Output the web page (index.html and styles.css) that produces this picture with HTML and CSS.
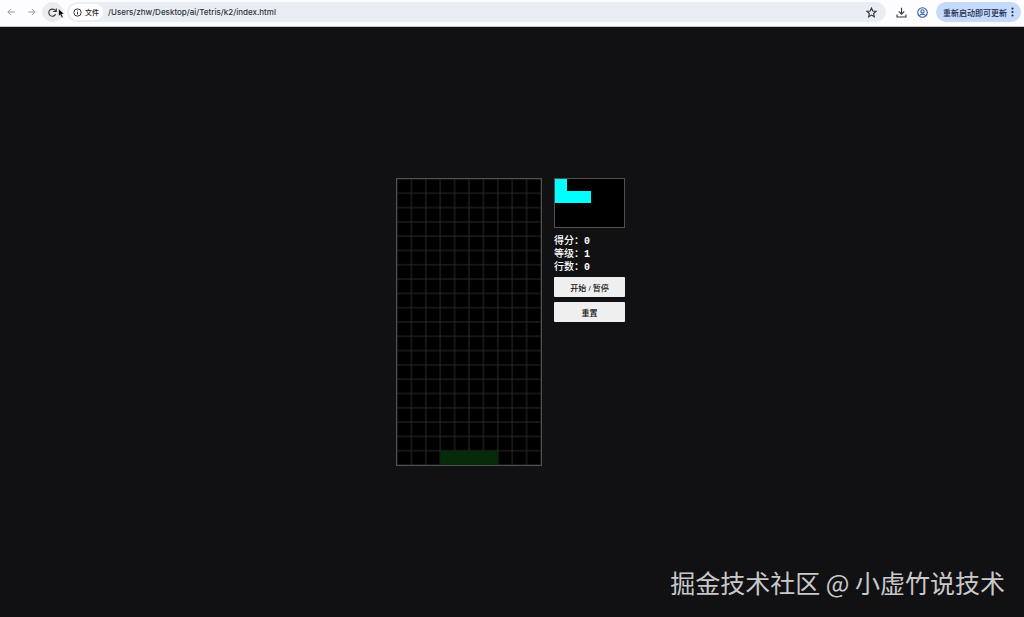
FILE: index.html
```
<!DOCTYPE html>
<html lang="zh-CN">
<head>
<meta charset="UTF-8">
<meta name="viewport" content="width=device-width, initial-scale=1.0">
<title>Tetris</title>
<link rel="stylesheet" href="styles.css">
</head>
<body>

<!-- Browser toolbar -->
<header class="toolbar">
    <button class="icon-btn nav-btn" aria-label="后退">
        <svg viewBox="0 0 16 16"><path d="M14 8H3M8 3L3 8l5 5"/></svg>
    </button>
    <button class="icon-btn nav-btn" aria-label="前进">
        <svg viewBox="0 0 16 16"><path d="M2 8h11M8 3l5 5-5 5"/></svg>
    </button>
    <button class="icon-btn reload-btn" aria-label="重新加载">
        <svg viewBox="0 0 16 16"><path d="M12.500 10.500a5.200 5.200 0 1 1-.6-5.500L13.500 6.500"/><path d="M13.500 2v4.500H9"/></svg>
        <svg class="cursor" viewBox="0 0 12 18"><path d="M1 1v13l3-3 2.500 5.500 2.500-1L6.500 10H11z"/></svg>
    </button>
    <div class="address-bar">
        <button class="file-chip">
            <svg viewBox="0 0 16 16"><circle cx="8" cy="8" r="6.500"/><path d="M8 7v4.500M8 4.200v1.600"/></svg>
            文件
        </button>
        <input class="url" type="text" aria-label="地址" value="/Users/zhw/Desktop/ai/Tetris/k2/index.html">
        <button class="icon-btn star-btn" aria-label="收藏">
            <svg viewBox="0 0 16 16"><path d="M8 1.500l1.900 4.400 4.800.4-3.600 3.200 1.100 4.700L8 11.700l-4.200 2.500 1.100-4.700L1.300 6.300l4.800-.4z"/></svg>
        </button>
    </div>
    <button class="icon-btn download-btn" aria-label="下载">
        <svg viewBox="0 0 16 16"><path d="M8 1v9M4 6.500l4 4 4-4M1.500 11v3.500h13V11"/></svg>
    </button>
    <button class="icon-btn profile-btn" aria-label="用户">
        <svg viewBox="0 0 16 16"><circle cx="8" cy="8" r="6.900"/><circle cx="8" cy="6.500" r="2.400"/><path d="M3.500 12.500c2-2.600 7-2.600 9 0"/></svg>
    </button>
    <button class="update-btn">
        重新启动即可更新
        <svg viewBox="0 0 4 16"><circle cx="2" cy="2.500" r="1.700"/><circle cx="2" cy="8" r="1.700"/><circle cx="2" cy="13.500" r="1.700"/></svg>
    </button>
</header>

<!-- Game -->
<main class="stage">
    <div class="game">
        <svg class="board" viewBox="0 0 300 600" preserveAspectRatio="none">
            <defs>
                <pattern id="grid" width="30" height="30" patternUnits="userSpaceOnUse">
                    <path class="grid-line" d="M0 0V30M30 0V30M0 0H30M0 30H30"/>
                </pattern>
            </defs>
            <rect width="300" height="600" fill="url(#grid)"/>
            <rect class="ghost" x="90" y="570" width="120" height="30"/>
        </svg>
        <aside class="side">
            <svg class="next" viewBox="0 0 69 48">
                <path d="M0 0h12v12h24v12H0z"/>
            </svg>
            <div class="info">
                <div>得分：<span class="value">0</span></div>
                <div>等级：<span class="value">1</span></div>
                <div>行数：<span class="value">0</span></div>
            </div>
            <button class="game-btn">开始 / 暂停</button>
            <button class="game-btn">重置</button>
        </aside>
    </div>
    <div class="watermark">掘金技术社区 @ 小虚竹说技术</div>
</main>

</body>
</html>
```

FILE: styles.css
```
* {
    box-sizing: border-box;
}

body {
    margin: 0;
    min-height: 100vh;
    display: flex;
    flex-direction: column;
    background: #111013;
    color: #fff;
    font-family: "Liberation Sans", "Noto Sans CJK SC", sans-serif;
}

button {
    border: none;
    padding: 0;
    font-family: inherit;
    cursor: pointer;
}

/* toolbar */
.toolbar {
    display: flex;
    align-items: center;
    height: 27px;
    padding: 0 3px 2px 0;
    background: #fdfcfe;
    border-bottom: 1px solid #c8c8cc;
}

.icon-btn {
    display: flex;
    align-items: center;
    justify-content: center;
    flex: none;
    width: 21px;
    height: 20px;
    border-radius: 10px;
    background: none;
    color: #333438;
}

.icon-btn svg,
.file-chip svg {
    width: 11px;
    height: 11px;
    fill: none;
    stroke: currentColor;
    stroke-width: 1.6;
}

.icon-btn.nav-btn {
    color: #97979b;
}

.nav-btn svg {
    width: 10px;
    height: 10px;
}

.reload-btn {
    position: relative;
    background: #ececef;
}

.icon-btn .cursor {
    position: absolute;
    left: 16px;
    top: 6px;
    width: 7px;
    height: 11px;
    fill: #000;
    stroke: #fff;
    stroke-width: 1;
}

.address-bar {
    display: flex;
    align-items: center;
    flex: 1;
    height: 20px;
    margin: 0 5px 0 4px;
    padding: 0 4px 0 2px;
    border-radius: 10px;
    background: #e9eef5;
}

.file-chip {
    display: flex;
    align-items: center;
    gap: 3px;
    height: 16px;
    padding: 0 4px;
    border-radius: 8px;
    background: #fff;
    color: #222326;
    font-size: 7px;
    font-weight: 500;
}

.file-chip svg {
    width: 9px;
    height: 9px;
}

.url {
    flex: 1;
    min-width: 0;
    border: none;
    padding: 0 0 0 5px;
    background: none;
    outline: none;
    color: #303237;
    font-family: Inter, "Liberation Sans", sans-serif;
    font-size: 8px;
    font-weight: 500;
}

.profile-btn {
    color: #2c5aa5;
}

.update-btn {
    display: flex;
    align-items: center;
    gap: 4px;
    height: 20px;
    margin-left: 3px;
    padding: 0 7px;
    border-radius: 10px;
    background: #c6dafa;
    color: #172c50;
    font-size: 8px;
    font-weight: 500;
}

.update-btn svg {
    width: 3px;
    height: 10px;
    fill: currentColor;
}

/* game */
.stage {
    position: relative;
    flex: 1;
    display: flex;
    align-items: center;
    justify-content: center;
    padding-right: 3px;
}

.game {
    display: flex;
    align-items: flex-start;
    gap: 12px;
}

.board {
    width: 146px;
    height: 288px;
    border: 1px solid #525252;
    background: #000;
}

.grid-line {
    fill: none;
    stroke: #2b2b2b;
    stroke-width: 2;
}

.ghost {
    fill: #062b09;
}

.side {
    display: flex;
    flex-direction: column;
    width: 71px;
}

.next {
    width: 100%;
    height: 50px;
    border: 1px solid #505050;
    background: #000;
    fill: #0ff;
}

.info {
    margin: 7px 0 3px;
    font-family: "Liberation Mono", "Noto Sans CJK SC", monospace;
    font-size: 10px;
    font-weight: 500;
    line-height: 13px;
}

.value {
    font-weight: bold;
    line-height: 1;
}

.game-btn {
    height: 20px;
    margin-bottom: 5px;
    border-radius: 1px;
    background: #efefef;
    color: #111;
    font-size: 8px;
    font-weight: 500;
}

.watermark {
    position: absolute;
    right: 19px;
    bottom: 17px;
    color: #c9c9ca;
    font-family: "Noto Sans CJK SC", sans-serif;
    font-size: 25px;
    line-height: 36px;
}
```
